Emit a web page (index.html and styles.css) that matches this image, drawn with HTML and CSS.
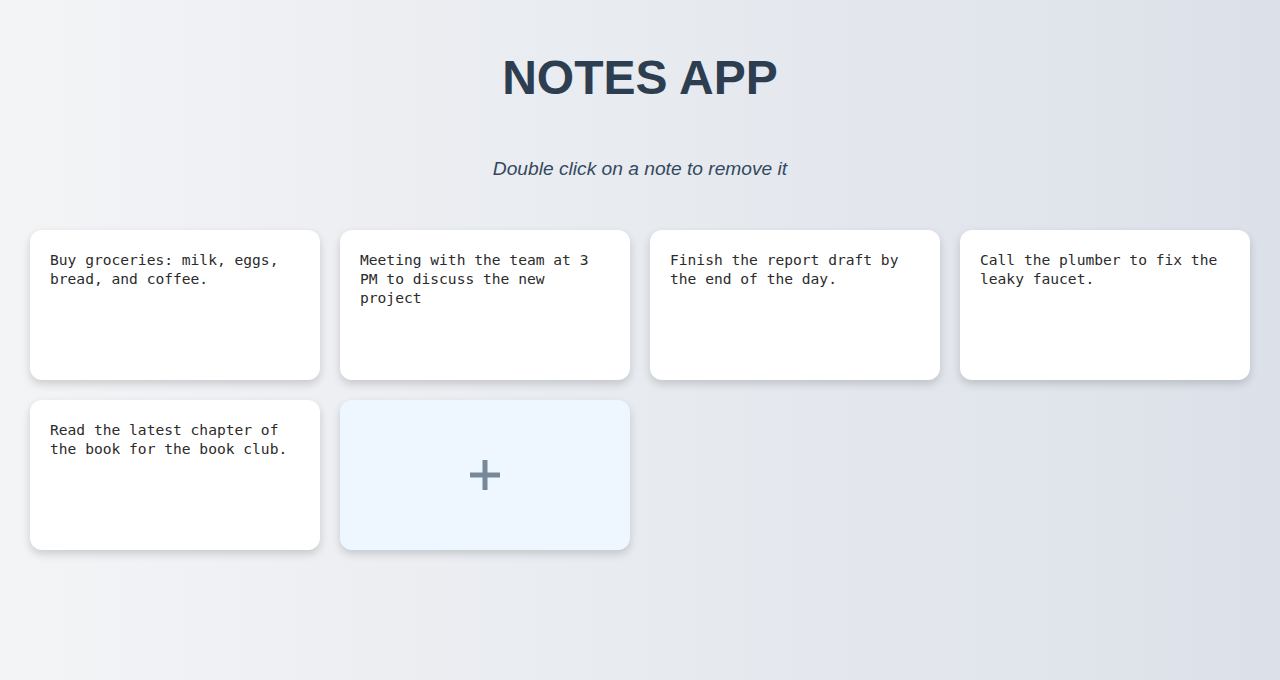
FILE: index.html
```html
<!DOCTYPE html>
<html lang="en">
<head>
<meta charset="utf-8">
<title>Notes App</title>
<link rel="stylesheet" href="styles.css">
</head>
<body>
<header class="header">
  <h1 class="title">NOTES APP</h1>
  <p class="hint">Double click on a note to remove it</p>
</header>
<main class="notes">
  <div class="note"><div class="note-text">Buy groceries: milk, eggs, bread, and coffee.</div></div>
  <div class="note"><div class="note-text">Meeting with the team at 3 PM to discuss the new project</div></div>
  <div class="note"><div class="note-text">Finish the report draft by the end of the day.</div></div>
  <div class="note"><div class="note-text">Call the plumber to fix the leaky faucet.</div></div>
  <div class="note"><div class="note-text">Read the latest chapter of the book for the book club.</div></div>
  <button class="add-note" type="button" aria-label="Add note">
    <svg width="30" height="30" viewBox="0 0 30 30" aria-hidden="true">
      <rect x="12.5" y="0" width="5" height="30" fill="#778899"/>
      <rect x="0" y="12.5" width="30" height="5" fill="#778899"/>
    </svg>
  </button>
</main>
</body>
</html>
```
FILE: styles.css
```css
* { box-sizing: border-box; }

html, body {
  margin: 0;
  min-height: 100vh;
}

body {
  background: linear-gradient(to right, #f3f4f6, #dce1e9);
  font-family: "Liberation Sans", Arial, sans-serif;
  color: #2c3e50;
}

.header {
  padding-top: 50px;
  text-align: center;
}

.title {
  margin: 0;
  font-size: 48px;
  line-height: 56px;
  font-weight: 700;
  color: #2c3e50;
}

.hint {
  margin: 52px 0 0;
  font-size: 19.2px;
  line-height: 22px;
  font-style: italic;
  color: #34495e;
}

.notes {
  display: grid;
  grid-template-columns: repeat(4, 290px);
  gap: 20px;
  padding: 0 30px;
  margin-top: 50px;
}

.note,
.add-note {
  height: 150px;
  border-radius: 12px;
  box-shadow: 0 4px 8px rgba(0, 0, 0, 0.16);
}

.note {
  background: #ffffff;
  padding: 20px;
}

.note-text {
  font-family: "DejaVu Sans Mono", "Liberation Mono", monospace;
  font-size: 14.6px;
  line-height: 19px;
  color: #2b2b2b;
  white-space: pre-wrap;
}

.add-note {
  display: flex;
  align-items: center;
  justify-content: center;
  background: #eef6ff;
  border: none;
  padding: 0;
  cursor: pointer;
}
```
